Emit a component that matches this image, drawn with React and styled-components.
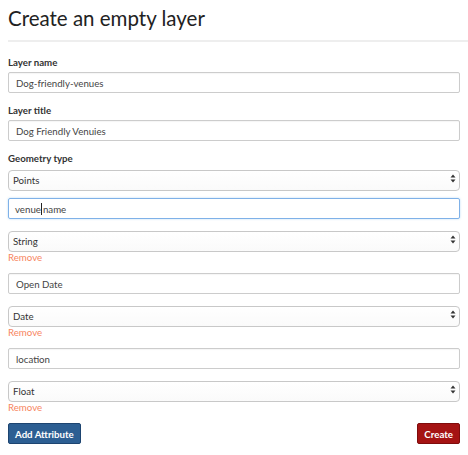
import React from 'react';
import styled, { createGlobalStyle } from 'styled-components';

const Global = createGlobalStyle`
  html, body {
    margin: 0;
    padding: 0;
    background: #fff;
    overflow: hidden;
  }
  body {
    font-family: Lato, "Open Sans", sans-serif;
    color: #333;
  }
`;

const Page = styled.div`
  padding: 0 0 0 8px;
  width: 460px;
  box-sizing: border-box;
`;

const Title = styled.h1`
  margin: 4px 0 0;
  font-size: 20.5px;
  line-height: 28px;
  font-weight: 400;
  color: #222;
`;

const Rule = styled.hr`
  margin: 8px -8px 12px 0;
  border: 0;
  border-top: 2px solid #eee;
`;

const Group = styled.div`
  display: flex;
  flex-direction: column;
  margin-bottom: 9px;
`;

const Label = styled.label`
  font-size: 9.7px;
  line-height: 16px;
  font-weight: 700;
  color: #333;
  margin-bottom: 2px;
`;

const Input = styled.input`
  box-sizing: border-box;
  height: 21px;
  width: 452px;
  padding: 0 7px;
  border: 1px solid #ccc;
  border-radius: 2px;
  font-family: Lato, sans-serif;
  font-size: 9.7px;
  color: #444;
  background: #fff;
  outline: none;
  box-shadow: inset 0 1px 1px rgba(0, 0, 0, 0.04);
`;

const FocusedInput = styled.div`
  box-sizing: border-box;
  height: 21px;
  width: 452px;
  padding: 0 6px;
  display: flex;
  align-items: center;
  border: 1px solid #7fb1e8;
  border-radius: 2px;
  font-size: 9.7px;
  color: #444;
  box-shadow: 0 0 2px rgba(102, 175, 233, 0.5);
`;

const Caret = styled.span`
  display: inline-block;
  width: 1px;
  height: 12px;
  background: #222;
  margin: 0 0.5px;
`;

const SelectWrap = styled.div`
  position: relative;
  width: 452px;
  height: 21px;
`;

const Select = styled.select`
  appearance: none;
  -webkit-appearance: none;
  box-sizing: border-box;
  width: 100%;
  height: 100%;
  padding: 0 4px;
  border: 1px solid #c8c8c8;
  border-radius: 4px;
  background: linear-gradient(#fff, #fafafa);
  font-family: Lato, sans-serif;
  font-size: 9.7px;
  color: #333;
  outline: none;
`;

const Arrows = styled.svg`
  position: absolute;
  right: 4px;
  top: 6px;
  pointer-events: none;
`;

const Remove = styled.a`
  font-size: 9.7px;
  line-height: 15px;
  color: #f7865f;
  cursor: pointer;
`;

const Attr = styled.div`
  display: flex;
  flex-direction: column;
  margin-bottom: 8px;
  & > ${SelectWrap} {
    margin-top: 10px;
  }
`;

const Actions = styled.div`
  display: flex;
  justify-content: space-between;
  width: 452px;
  margin-top: 8px;
`;

const Button = styled.button`
  height: 21px;
  padding: 0 6px;
  border: 1px solid ${p => (p.$danger ? '#7f0c0c' : '#1d4470')};
  border-radius: 2px;
  background: ${p => (p.$danger ? '#a51313' : '#2c5e92')};
  color: #fff;
  font-family: Lato, sans-serif;
  font-size: 9.7px;
  font-weight: 700;
  cursor: pointer;
`;

function SelectField({ value, options }) {
  return (
    <SelectWrap>
      <Select defaultValue={value}>
        {options.map(o => (
          <option key={o}>{o}</option>
        ))}
      </Select>
      <Arrows width="6" height="9" viewBox="0 0 6 9">
        <path d="M3 0.5 L5.5 3.5 H0.5 Z" fill="#333" />
        <path d="M3 8.5 L5.5 5.5 H0.5 Z" fill="#333" />
      </Arrows>
    </SelectWrap>
  );
}

const types = ['String', 'Integer', 'Float', 'Date'];

export default function App() {
  return (
    <Page>
      <Global />
      <Title>Create an empty layer</Title>
      <Rule />
      <Group>
        <Label>Layer name</Label>
        <Input defaultValue="Dog-friendly-venues" />
      </Group>
      <Group>
        <Label>Layer title</Label>
        <Input defaultValue="Dog Friendly Venuies" />
      </Group>
      <Group>
        <Label>Geometry type</Label>
        <SelectField value="Points" options={['Points', 'Lines', 'Polygons']} />
      </Group>

      <Attr>
        <FocusedInput>
          venue<Caret />name
        </FocusedInput>
        <SelectField value="String" options={types} />
        <Remove>Remove</Remove>
      </Attr>
      <Attr>
        <Input defaultValue="Open Date" />
        <SelectField value="Date" options={types} />
        <Remove>Remove</Remove>
      </Attr>
      <Attr>
        <Input defaultValue="location" />
        <SelectField value="Float" options={types} />
        <Remove>Remove</Remove>
      </Attr>

      <Actions>
        <Button>Add Attribute</Button>
        <Button $danger>Create</Button>
      </Actions>
    </Page>
  );
}
